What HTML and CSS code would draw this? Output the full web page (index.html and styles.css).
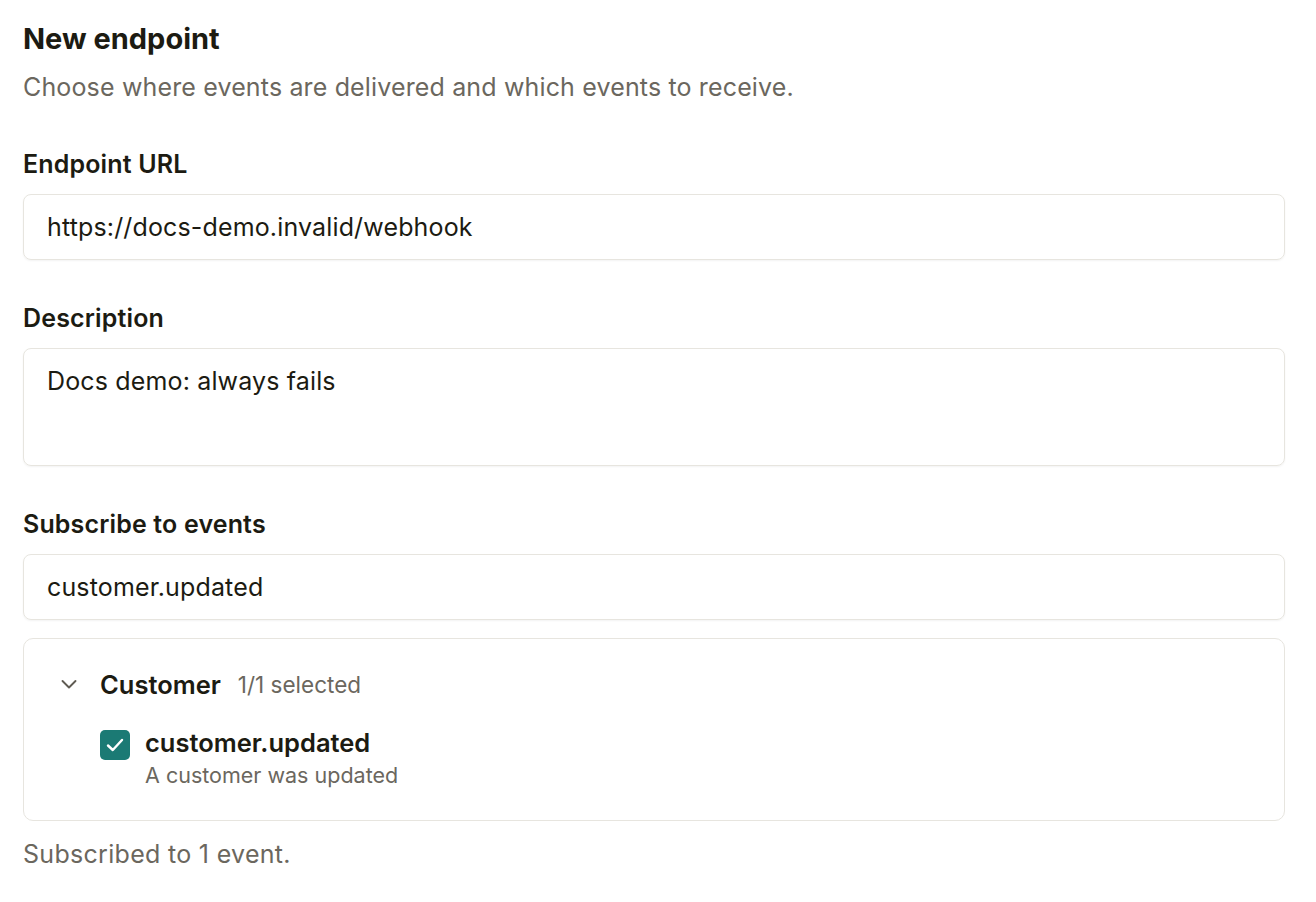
FILE: index.html
```html
<!DOCTYPE html>
<html>
<head>
<meta charset="utf-8">
<link rel="stylesheet" href="styles.css">
</head>
<body>
<main class="page">
  <h1 class="title">New endpoint</h1>
  <p class="subtitle">Choose where events are delivered and which events to receive.</p>

  <div class="field field-first">
    <label class="label">Endpoint URL</label>
    <div class="input">https://docs-demo.invalid/webhook</div>
  </div>

  <div class="field">
    <label class="label">Description</label>
    <div class="input textarea">Docs demo: always fails</div>
  </div>

  <div class="field">
    <label class="label">Subscribe to events</label>
    <div class="input">customer.updated</div>
  </div>

  <div class="panel">
    <div class="group-head">
      <svg class="chevron" width="18" height="18" viewBox="0 0 18 18"><path d="M2.5 6 L9 12.5 L15.5 6" fill="none" stroke="#5f5b52" stroke-width="1.9" stroke-linecap="round" stroke-linejoin="round"/></svg>
      <span class="group-name">Customer</span>
      <span class="group-count">1/1 selected</span>
    </div>
    <div class="event">
      <span class="checkbox">
        <svg width="30" height="30" viewBox="0 0 30 30"><path d="M8 15.5 L12.8 20 L22 10" fill="none" stroke="#fff" stroke-width="2.4" stroke-linecap="round" stroke-linejoin="round"/></svg>
      </span>
      <div class="event-text">
        <div class="event-name">customer.updated</div>
        <div class="event-desc">A customer was updated</div>
      </div>
    </div>
  </div>

  <p class="summary">Subscribed to 1 event.</p>
</main>
</body>
</html>
```

FILE: styles.css
```css
* { box-sizing: border-box; }
html, body { margin: 0; padding: 0; background: #fff; }
body {
  font-family: Inter, "Noto Sans", sans-serif;
  color: #1c1b12;
}
.page {
  padding: 22px 31px 0 23px;
  display: flex;
  flex-direction: column;
}
.title {
  margin: 0;
  font-size: 29px;
  font-weight: 700;
  line-height: 34px;
}
.subtitle {
  margin: 16px 0 0;
  font-size: 25px;
  line-height: 30px;
  letter-spacing: 0.15px;
  color: #6b675e;
}
.field {
  margin-top: 43px;
  display: flex;
  flex-direction: column;
}
.field-first { margin-top: 47px; }
.label {
  font-size: 25px;
  font-weight: 600;
  line-height: 30px;
  letter-spacing: 0.15px;
  margin-bottom: 15px;
}
.input {
  height: 66px;
  border: 1.5px solid #e7e5df;
  border-radius: 8px;
  box-shadow: 0 1px 2px rgba(0,0,0,0.05);
  padding: 0 23px;
  display: flex;
  align-items: center;
  font-size: 25px;
  letter-spacing: 0.15px;
  color: #1c1b12;
}
.textarea {
  height: 118px;
  align-items: flex-start;
  padding-top: 17px;
  line-height: 30px;
}
.panel {
  margin-top: 18px;
  border: 1.5px solid #e7e5df;
  border-radius: 10px;
  padding: 28px 36px 32px;
}
.group-head {
  display: flex;
  align-items: center;
  height: 34px;
}
.chevron { margin-right: 22px; }
.group-name {
  font-size: 25.5px;
  font-weight: 600;
  margin-right: 17px;
}
.group-count {
  font-size: 22.5px;
  color: #6b675e;
}
.event {
  margin-top: 16px;
  margin-left: 40px;
  display: flex;
  align-items: flex-start;
}
.checkbox {
  width: 30px;
  height: 30px;
  border-radius: 5px;
  background: #1b7a74;
  margin-top: 13px;
  margin-right: 15px;
  display: flex;
}
.event-name {
  font-size: 25.5px;
  font-weight: 600;
  line-height: 30px;
  margin-top: 11px;
}
.event-desc {
  font-size: 21.5px;
  color: #6b675e;
  line-height: 26px;
  margin-top: 4px;
}
.summary {
  margin: 18px 0 0;
  font-size: 25px;
  letter-spacing: 0.3px;
  line-height: 30px;
  color: #6b675e;
}
```
